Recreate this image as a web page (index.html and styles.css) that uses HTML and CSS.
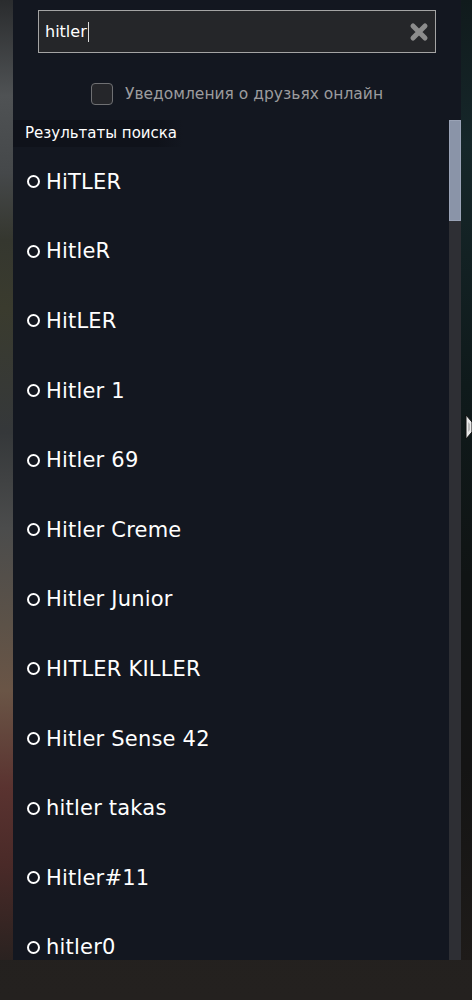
FILE: index.html
```html
<!DOCTYPE html>
<html lang="ru">
<head>
    <meta charset="UTF-8">
    <meta name="viewport" content="width=device-width, initial-scale=1.0">
    <title>Друзья</title>
    <link rel="stylesheet" href="styles.css">
</head>
<body>
    <div class="panel">
        <div class="search">
            <div class="search-box">
                <span class="query">hitler</span><span class="caret"></span>
                <svg class="clear" width="20" height="20" viewBox="0 0 20 20">
                    <path d="M4 4 L16 16 M16 4 L4 16" stroke="#8c8c8c" stroke-width="5" stroke-linecap="round"/>
                </svg>
            </div>
        </div>

        <label class="notify">
            <span class="checkbox"></span>
            <span>Уведомления о друзьях онлайн</span>
        </label>

        <div class="results">
            <div class="results-main">
                <div class="results-title">Результаты поиска</div>
                <ul class="list">
                    <li><span class="dot"></span>HiTLER</li>
                    <li><span class="dot"></span>HitleR</li>
                    <li><span class="dot"></span>HitLER</li>
                    <li><span class="dot"></span>Hitler 1</li>
                    <li><span class="dot"></span>Hitler 69</li>
                    <li><span class="dot"></span>Hitler Creme</li>
                    <li><span class="dot"></span>Hitler Junior</li>
                    <li><span class="dot"></span>HITLER KILLER</li>
                    <li><span class="dot"></span>Hitler Sense 42</li>
                    <li><span class="dot"></span>hitler takas</li>
                    <li><span class="dot"></span>Hitler#11</li>
                    <li><span class="dot"></span>hitler0</li>
                </ul>
            </div>
            <div class="scrollbar"><div class="thumb"></div></div>
        </div>
    </div>

    <svg class="cursor" width="8" height="26" viewBox="0 0 8 26">
        <path d="M1 1 L7 8 L7 18 L1 25 Z" fill="#e8e8e8" stroke="#111" stroke-width="1"/>
        <path d="M3 8 L5 10 L5 16 L3 18 Z" fill="#bbb"/>
    </svg>
</body>
</html>
```

FILE: styles.css
```css
body {
    margin: 0;
    width: 472px;
    height: 1000px;
    overflow: hidden;
    font-family: "DejaVu Sans", Verdana, sans-serif;
    color: #fff;
    background:
        linear-gradient(180deg, #2a2c2e 0%, #4f5254 10%, #45484a 18%, #35372f 25%, #3a3b2e 32%, #35383a 45%, #4b4c4c 55%, #5c5248 65%, #6a5546 72%, #5a3330 82%, #4a2a28 90%, #2a2220 100%) left top / 13px 960px no-repeat,
        linear-gradient(180deg, #101a1c 0%, #16272a 15%, #0f1a1b 40%, #101414 60%, #141414 80%, #1e1b19 100%) right top / 11px 960px no-repeat,
        linear-gradient(180deg, #1c1b1a 0%, #24211f 100%);
}

.panel {
    margin: 0 11px 0 13px;
    height: 960px;
    background: #131720;
    display: flex;
    flex-direction: column;
}

.search {
    padding: 10px 25px 0 25px;
}

.search-box {
    height: 41px;
    border: 1px solid #a4a4a4;
    background: #252629;
    display: flex;
    align-items: center;
    padding: 0 6px;
    font-size: 16px;
}

.query {
    color: #fff;
}

.caret {
    width: 1px;
    height: 20px;
    background: #ddd;
    margin-left: 1px;
}

.clear {
    margin-left: auto;
}

.notify {
    display: flex;
    align-items: center;
    justify-content: center;
    gap: 12px;
    margin-top: 30px;
    height: 22px;
    color: #9c9c9e;
    font-size: 15.5px;
}

.checkbox {
    width: 20px;
    height: 20px;
    border: 1px solid #6f7073;
    border-radius: 4px;
    background: #25262a;
}

.results {
    margin-top: 15px;
    flex: 1;
    display: flex;
    min-height: 0;
    overflow: hidden;
}

.results-main {
    flex: 1;
    min-width: 0;
}

.results-title {
    width: 158px;
    height: 27px;
    line-height: 27px;
    padding-left: 12px;
    font-size: 15px;
    background: linear-gradient(90deg, #0f121a 85%, #131720 100%);
}

.list {
    list-style: none;
    margin: 0;
    padding: 0 0 0 14px;
}

.list li {
    height: 69.6px;
    display: flex;
    align-items: center;
    font-size: 21px;
    letter-spacing: 0.2px;
}

.dot {
    width: 9px;
    height: 9px;
    border: 2px solid #fff;
    border-radius: 50%;
    margin-right: 6px;
    flex-shrink: 0;
}

.scrollbar {
    width: 12px;
    background: #2e2f34;
}

.thumb {
    height: 101px;
    background: #8a94a8;
    border: 1px solid #9aa3b6;
    box-sizing: border-box;
}

.cursor {
    position: absolute;
    left: 465px;
    top: 414px;
}
```
